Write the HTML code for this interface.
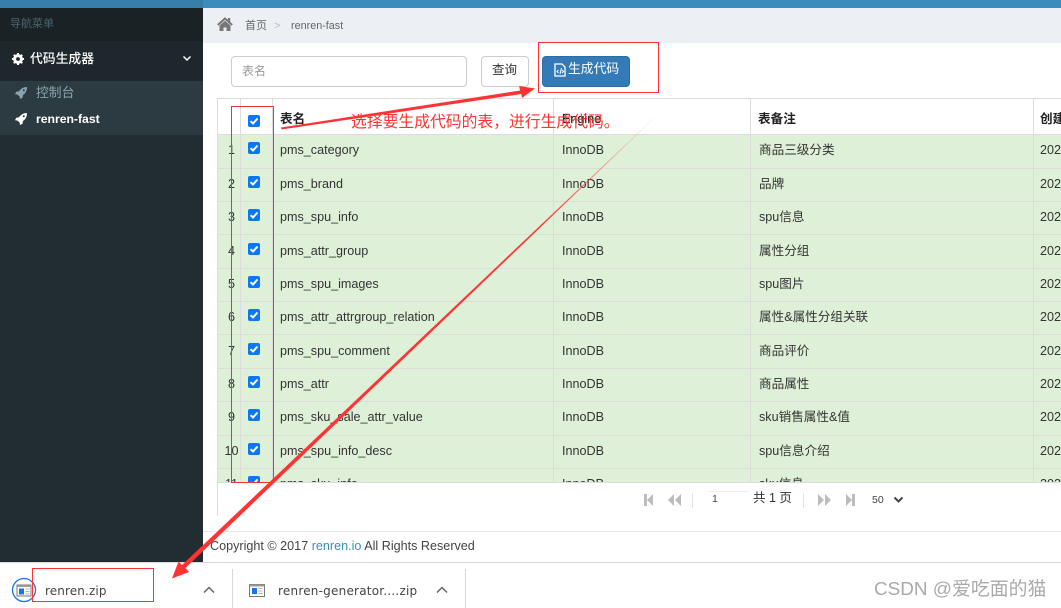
<!DOCTYPE html>
<html><head><meta charset="utf-8">
<style>
*{box-sizing:border-box}
html,body{margin:0;padding:0;width:1061px;height:608px;overflow:hidden;background:#fff}
body{position:relative;font-family:"Liberation Sans","Noto Sans CJK SC",sans-serif;font-size:12.6px;color:#333}
.a{position:absolute}
.t{position:absolute;white-space:nowrap;line-height:16px}
.hl{position:absolute;left:218px;width:843px;height:1px;background:#dcdcdc}
.vl{position:absolute;width:1px;background:#dcdcdc}
.n{position:absolute;left:218px;width:22px;text-align:center;padding-left:5px;line-height:16px;color:#333}
.c{position:absolute;left:248px;width:12px;height:12px;background:#0b76f7;border-radius:2px}
.c svg{position:absolute;left:0;top:0}
.th{font-weight:bold;color:#222}
</style></head><body>
<div class="a" style="left:0;top:0;width:203px;height:8px;background:#367fa9"></div>
<div class="a" style="left:203px;top:0;width:858px;height:8px;background:#3c8dbc"></div>
<div class="a" style="left:0;top:8px;width:203px;height:554px;background:#222d32"></div>
<div class="a" style="left:0;top:8px;width:203px;height:33px;background:#1a2226"></div>
<div class="t" style="left:10px;top:16px;font-size:11px;color:#4b646f">导航菜单</div>
<div class="a" style="left:0;top:41px;width:203px;height:40px;background:#1e282c"></div>
<svg class="a" style="left:12px;top:53px" width="12" height="12" viewBox="0 0 12 12"><circle cx="6" cy="6" r="3.4" fill="none" stroke="#fff" stroke-width="3"/><path d="M6 0v2.500M6 9.500V12M0 6h2.500M9.500 6H12M1.800 1.800l1.800 1.800M8.400 8.400l1.800 1.800M10.200 1.800L8.400 3.600M3.600 8.400l-1.800 1.800" stroke="#fff" stroke-width="2"/></svg>
<div class="t" style="left:30px;top:51px;color:#fff;font-size:12.800px;font-weight:500">代码生成器</div>
<svg class="a" style="left:182px;top:55px" width="10" height="7" viewBox="0 0 10 7"><path d="M1.500 1.500L5 5l3.500-3.500" fill="none" stroke="#fff" stroke-width="1.500"/></svg>
<div class="a" style="left:0;top:81px;width:203px;height:54px;background:#2c3b41"></div>
<svg class="a" style="left:15px;top:87px" width="12" height="12" viewBox="0 0 12 12"><path fill-rule="evenodd" d="M12 0C8.500 0 6 1.500 4 4.300L1.300 4.800 0 7.300l2.600.3 2.100 2.100.3 2.300 2.500-1.300.5-2.700C10.500 6.500 12 3.500 12 0zM8.800 2.200a1 1 0 1 1 0 2 1 1 0 0 1 0-2z" fill="#8aa4af"/></svg>
<div class="t" style="left:36px;top:85px;color:#8aa4af;font-size:12.800px">控制台</div>
<svg class="a" style="left:15px;top:113px" width="12" height="12" viewBox="0 0 12 12"><path fill-rule="evenodd" d="M12 0C8.500 0 6 1.500 4 4.300L1.300 4.800 0 7.300l2.600.3 2.100 2.100.3 2.300 2.500-1.300.5-2.700C10.500 6.500 12 3.500 12 0zM8.800 2.200a1 1 0 1 1 0 2 1 1 0 0 1 0-2z" fill="#fff"/></svg>
<div class="t" style="left:36px;top:111px;color:#fff;font-size:12.200px;font-weight:bold">renren-fast</div>

<div class="a" style="left:203px;top:8px;width:858px;height:35px;background:#ecf0f5"></div>
<svg class="a" style="left:217px;top:17px" width="16" height="14" viewBox="0 0 16 14"><path d="M.8 8L8 1.500 15.200 8" fill="none" stroke="#777" stroke-width="2"/><rect x="11" y="1" width="2.200" height="4" fill="#777"/><path d="M2.500 8.500L8 3.800l5.500 4.700V14H9.500v-3.500h-3V14h-4z" fill="#777"/></svg>
<div class="t" style="left:245px;top:18px;font-size:11px;color:#666">首页</div>
<div class="t" style="left:274px;top:18px;font-size:11px;color:#bbb">&gt;</div>
<div class="t" style="left:291px;top:18px;font-size:10.800px;color:#666">renren-fast</div>

<div class="a" style="left:231px;top:56px;width:236px;height:31px;border:1px solid #ccc;border-radius:4px"></div>
<div class="t" style="left:242px;top:63px;color:#999;font-size:12px">表名</div>
<div class="a" style="left:481px;top:56px;width:48px;height:31px;border:1px solid #ccc;border-radius:4px"></div>
<div class="t" style="left:492px;top:62px;color:#333;font-size:12.500px">查询</div>
<div class="a" style="left:542px;top:56px;width:88px;height:31px;background:#337ab7;border:1px solid #2e6da4;border-radius:4px"></div>
<svg class="a" style="left:554px;top:63px" width="12" height="14" viewBox="0 0 12 14"><path d="M1 1h7l3 3v9H1z" fill="none" stroke="#fff" stroke-width="1.300"/><path d="M7.500 5L6 11M4.500 7L3 8.500 4.500 10M8 7l1.500 1.500L8 10" fill="none" stroke="#fff" stroke-width="1"/></svg>
<div class="t" style="left:568px;top:61px;color:#fff;font-size:12.800px">生成代码</div>

<!-- table -->
<div class="a" style="left:218px;top:135px;width:843px;height:347px;background:#dff0d8"></div>
<div class="hl" style="top:98px"></div>
<div class="hl" style="top:134px"></div>
<div class="hl" style="top:168px"></div>
<div class="hl" style="top:201px"></div>
<div class="hl" style="top:234px"></div>
<div class="hl" style="top:268px"></div>
<div class="hl" style="top:301px"></div>
<div class="hl" style="top:334px"></div>
<div class="hl" style="top:368px"></div>
<div class="hl" style="top:401px"></div>
<div class="hl" style="top:435px"></div>
<div class="hl" style="top:468px"></div>
<div class="vl" style="left:217px;top:98px;height:418px"></div>
<div class="vl" style="left:240px;top:99px;height:383px"></div>
<div class="vl" style="left:272px;top:99px;height:383px"></div>
<div class="vl" style="left:553px;top:99px;height:383px"></div>
<div class="vl" style="left:750px;top:99px;height:383px"></div>
<div class="vl" style="left:1033px;top:99px;height:383px"></div>

<div class="t th" style="left:280px;top:111px">表名</div>
<div class="t" style="left:562px;top:111px;color:#222;-webkit-text-stroke:.25px #222">Engine</div>
<div class="t th" style="left:758px;top:111px">表备注</div>
<div class="t th" style="left:1040px;top:111px">创建时间</div>

<div class="c" style="top:115px"><svg width="12" height="12"><path d="M2.500 6.200L5 8.500l4.500-5" fill="none" stroke="#fff" stroke-width="2"/></svg></div>
<div class="a" style="left:0;top:0;width:1061px;height:482px;overflow:hidden">
<div class="n" style="top:142px">1</div><div class="c" style="top:142px"><svg width="12" height="12"><path d="M2.500 6.200L5 8.500l4.500-5" fill="none" stroke="#fff" stroke-width="2"/></svg></div><div class="t" style="left:280px;top:142px">pms_category</div><div class="t" style="left:562px;top:142px">InnoDB</div><div class="t" style="left:759px;top:142px">商品三级分类</div><div class="t" style="left:1040px;top:142px">2020</div>
<div class="n" style="top:176px">2</div><div class="c" style="top:176px"><svg width="12" height="12"><path d="M2.500 6.200L5 8.500l4.500-5" fill="none" stroke="#fff" stroke-width="2"/></svg></div><div class="t" style="left:280px;top:176px">pms_brand</div><div class="t" style="left:562px;top:176px">InnoDB</div><div class="t" style="left:759px;top:176px">品牌</div><div class="t" style="left:1040px;top:176px">2020</div>
<div class="n" style="top:209px">3</div><div class="c" style="top:209px"><svg width="12" height="12"><path d="M2.500 6.200L5 8.500l4.500-5" fill="none" stroke="#fff" stroke-width="2"/></svg></div><div class="t" style="left:280px;top:209px">pms_spu_info</div><div class="t" style="left:562px;top:209px">InnoDB</div><div class="t" style="left:759px;top:209px">spu信息</div><div class="t" style="left:1040px;top:209px">2020</div>
<div class="n" style="top:243px">4</div><div class="c" style="top:243px"><svg width="12" height="12"><path d="M2.500 6.200L5 8.500l4.500-5" fill="none" stroke="#fff" stroke-width="2"/></svg></div><div class="t" style="left:280px;top:243px">pms_attr_group</div><div class="t" style="left:562px;top:243px">InnoDB</div><div class="t" style="left:759px;top:243px">属性分组</div><div class="t" style="left:1040px;top:243px">2020</div>
<div class="n" style="top:276px">5</div><div class="c" style="top:276px"><svg width="12" height="12"><path d="M2.500 6.200L5 8.500l4.500-5" fill="none" stroke="#fff" stroke-width="2"/></svg></div><div class="t" style="left:280px;top:276px">pms_spu_images</div><div class="t" style="left:562px;top:276px">InnoDB</div><div class="t" style="left:759px;top:276px">spu图片</div><div class="t" style="left:1040px;top:276px">2020</div>
<div class="n" style="top:309px">6</div><div class="c" style="top:309px"><svg width="12" height="12"><path d="M2.500 6.200L5 8.500l4.500-5" fill="none" stroke="#fff" stroke-width="2"/></svg></div><div class="t" style="left:280px;top:309px">pms_attr_attrgroup_relation</div><div class="t" style="left:562px;top:309px">InnoDB</div><div class="t" style="left:759px;top:309px">属性&amp;属性分组关联</div><div class="t" style="left:1040px;top:309px">2020</div>
<div class="n" style="top:343px">7</div><div class="c" style="top:343px"><svg width="12" height="12"><path d="M2.500 6.200L5 8.500l4.500-5" fill="none" stroke="#fff" stroke-width="2"/></svg></div><div class="t" style="left:280px;top:343px">pms_spu_comment</div><div class="t" style="left:562px;top:343px">InnoDB</div><div class="t" style="left:759px;top:343px">商品评价</div><div class="t" style="left:1040px;top:343px">2020</div>
<div class="n" style="top:376px">8</div><div class="c" style="top:376px"><svg width="12" height="12"><path d="M2.500 6.200L5 8.500l4.500-5" fill="none" stroke="#fff" stroke-width="2"/></svg></div><div class="t" style="left:280px;top:376px">pms_attr</div><div class="t" style="left:562px;top:376px">InnoDB</div><div class="t" style="left:759px;top:376px">商品属性</div><div class="t" style="left:1040px;top:376px">2020</div>
<div class="n" style="top:409px">9</div><div class="c" style="top:409px"><svg width="12" height="12"><path d="M2.500 6.200L5 8.500l4.500-5" fill="none" stroke="#fff" stroke-width="2"/></svg></div><div class="t" style="left:280px;top:409px">pms_sku_sale_attr_value</div><div class="t" style="left:562px;top:409px">InnoDB</div><div class="t" style="left:759px;top:409px">sku销售属性&amp;值</div><div class="t" style="left:1040px;top:409px">2020</div>
<div class="n" style="top:443px">10</div><div class="c" style="top:443px"><svg width="12" height="12"><path d="M2.500 6.200L5 8.500l4.500-5" fill="none" stroke="#fff" stroke-width="2"/></svg></div><div class="t" style="left:280px;top:443px">pms_spu_info_desc</div><div class="t" style="left:562px;top:443px">InnoDB</div><div class="t" style="left:759px;top:443px">spu信息介绍</div><div class="t" style="left:1040px;top:443px">2020</div>
<div class="n" style="top:476px">11</div><div class="c" style="top:476px"><svg width="12" height="12"><path d="M2.500 6.200L5 8.500l4.500-5" fill="none" stroke="#fff" stroke-width="2"/></svg></div><div class="t" style="left:280px;top:476px">pms_sku_info</div><div class="t" style="left:562px;top:476px">InnoDB</div><div class="t" style="left:759px;top:476px">sku信息</div><div class="t" style="left:1040px;top:476px">2020</div>
</div>
<div class="hl" style="top:482px"></div>

<!-- pager -->
<svg class="a" style="left:640px;top:490px" width="220" height="20" viewBox="0 0 220 20">
<g fill="#bcbcbc"><rect x="4" y="4" width="3" height="12"/><path d="M13 4v12L7 10z"/><path d="M34 4v12l-6-6zM41 4v12l-6-6z"/><path d="M178 4v12l6-6zM185 4v12l6-6z"/><path d="M206 4v12l6-6z"/><rect x="212" y="4" width="3" height="12"/></g>
<rect x="52" y="3" width="1" height="15" fill="#e4e4e4"/><rect x="163" y="3" width="1" height="15" fill="#e4e4e4"/>
</svg>
<div class="t" style="left:712px;top:491px;font-size:10.500px;color:#444">1</div>
<div class="a" style="left:709px;top:491px;width:40px;height:1px;background:#eee"></div>
<div class="t" style="left:753px;top:490px;font-size:12.500px">共 1 页</div>
<div class="t" style="left:872px;top:492px;font-size:10.500px;color:#444">50</div>
<svg class="a" style="left:893px;top:496px" width="11" height="8" viewBox="0 0 11 8"><path d="M1.500 1.500l4 4 4-4" fill="none" stroke="#444" stroke-width="2"/></svg>

<div class="a" style="left:203px;top:531px;width:858px;height:1px;background:#e8e8e8"></div>
<div class="t" style="left:210px;top:538px;font-size:12.600px;color:#444">Copyright © 2017 <span style="color:#3c8dbc">renren.io</span> All Rights Reserved</div>

<!-- download bar -->
<div class="a" style="left:0;top:562px;width:1061px;height:46px;background:#fff;border-top:1px solid #d9d9d9"></div>
<svg class="a" style="left:11px;top:576px" width="28" height="28" viewBox="0 0 28 28"><circle cx="13" cy="14" r="11.500" fill="none" stroke="#1a73e8" stroke-width="1.300"/><rect x="6" y="9" width="14" height="11" fill="#fff" stroke="#777" stroke-width="1"/><rect x="6" y="9" width="14" height="2" fill="#999"/><rect x="8" y="12.500" width="5" height="6" fill="#1a73e8"/><path d="M14.500 13h4M14.500 15.500h4M14.500 18h4" stroke="#999" stroke-width=".8"/></svg>
<div class="t" style="left:45px;top:583px;letter-spacing:.12px;color:#444;font-family:'DejaVu Sans','Liberation Sans',sans-serif;font-size:12px">renren.zip</div>
<svg class="a" style="left:203px;top:586px" width="12" height="8" viewBox="0 0 12 8"><path d="M1 6.500l5-5 5 5" fill="none" stroke="#666" stroke-width="1.500"/></svg>
<div class="a" style="left:232px;top:569px;width:1px;height:39px;background:#d9d9d9"></div>
<svg class="a" style="left:249px;top:584px" width="16" height="13" viewBox="0 0 16 13"><rect x=".5" y=".5" width="15" height="12" fill="#fff" stroke="#777"/><rect x=".5" y=".5" width="15" height="2" fill="#999"/><rect x="3" y="4" width="5" height="6" fill="#1a73e8"/><path d="M9.500 4.500h4M9.500 7h4M9.500 9.500h4" stroke="#999" stroke-width=".8"/></svg>
<div class="t" style="left:278px;top:583px;letter-spacing:.22px;color:#444;font-family:'DejaVu Sans','Liberation Sans',sans-serif;font-size:12px">renren-generator....zip</div>
<svg class="a" style="left:436px;top:586px" width="12" height="8" viewBox="0 0 12 8"><path d="M1 6.500l5-5 5 5" fill="none" stroke="#666" stroke-width="1.500"/></svg>
<div class="a" style="left:465px;top:569px;width:1px;height:39px;background:#d9d9d9"></div>
<div class="t" style="left:874px;top:578px;height:24px;line-height:24px;font-size:18.900px;color:#aaa">CSDN @爱吃面的猫</div>

<!-- annotations -->
<div class="t" style="left:351px;top:115px;color:#f33;font-size:15.800px">选择要生成代码的表，进行生成代码。</div>
<div class="a" style="left:538px;top:42px;width:121px;height:51px;border:1px solid #f33"></div>
<div class="a" style="left:231px;top:106px;width:43px;height:377px;border:1px solid #e33"></div>
<div class="a" style="left:32px;top:568px;width:122px;height:34px;border:1px solid #f33"></div>
<svg class="a" style="left:0;top:0" width="1061" height="608" viewBox="0 0 1061 608">
<defs><linearGradient id="g" gradientUnits="userSpaceOnUse" x1="661" y1="111" x2="540" y2="226"><stop offset="0" stop-color="#f33" stop-opacity="0"/><stop offset="1" stop-color="#f33"/></linearGradient></defs>
<path d="M281 127.500L520 90.500l-.8-4.500L535 88.500l-13 9.500-.8-4L281.500 129.500z" fill="#f33"/>
<path d="M661 111L661.300 111.300 185.500 568l3.500 4-17 6.500 6.500-17 3.500 3.500z" fill="url(#g)"/>
</svg>
</body></html>
